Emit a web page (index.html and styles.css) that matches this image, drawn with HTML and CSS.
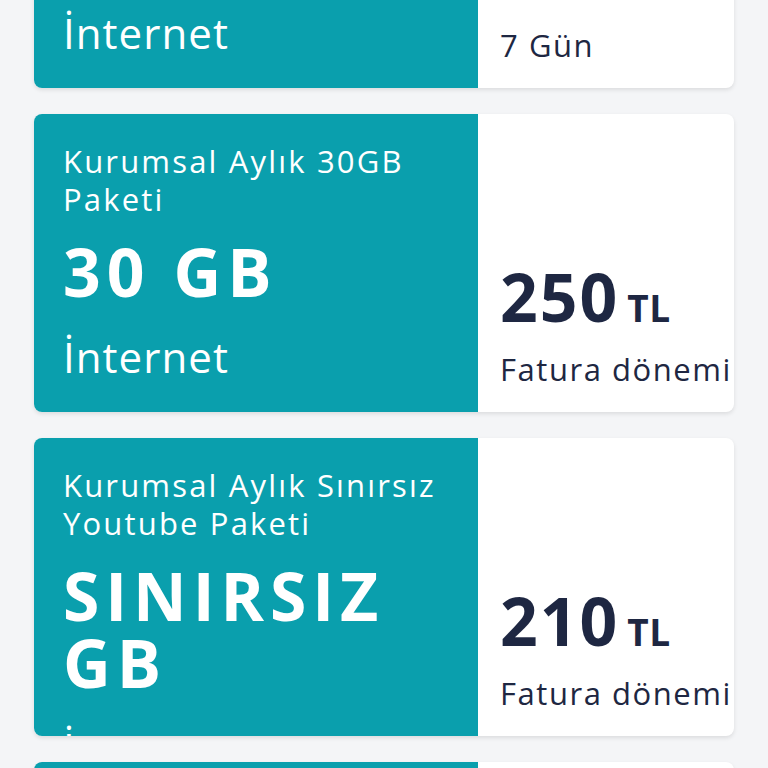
FILE: index.html
```html
<!DOCTYPE html>
<html lang="tr">
<head>
    <meta charset="UTF-8">
    <meta name="viewport" content="width=device-width, initial-scale=1.0">
    <title>Kurumsal Paketler</title>
    <link rel="stylesheet" href="styles.css">
</head>
<body>
    <!-- Package list (scrolled) -->
    <div class="packages">
        <div class="card">
            <div class="card-main">
                <p class="name">Kurumsal Haftalık 5GB Paketi</p>
                <p class="amount">5 GB</p>
                <p class="kind">İnternet</p>
            </div>
            <div class="card-price">
                <p class="price">45<span class="currency">TL</span></p>
                <p class="period">7 Gün</p>
            </div>
        </div>

        <div class="card">
            <div class="card-main">
                <p class="name">Kurumsal Aylık 30GB Paketi</p>
                <p class="amount">30 GB</p>
                <p class="kind">İnternet</p>
            </div>
            <div class="card-price">
                <p class="price">250<span class="currency">TL</span></p>
                <p class="period">Fatura dönemi</p>
            </div>
        </div>

        <div class="card">
            <div class="card-main">
                <p class="name">Kurumsal Aylık Sınırsız Youtube Paketi</p>
                <p class="amount">SINIRSIZ GB</p>
                <p class="kind">İnternet</p>
            </div>
            <div class="card-price">
                <p class="price">210<span class="currency">TL</span></p>
                <p class="period">Fatura dönemi</p>
            </div>
        </div>

        <div class="card">
            <div class="card-main">
                <p class="name">Kurumsal Aylık 50GB Paketi</p>
                <p class="amount">50 GB</p>
                <p class="kind">İnternet</p>
            </div>
            <div class="card-price">
                <p class="price">350<span class="currency">TL</span></p>
                <p class="period">Fatura dönemi</p>
            </div>
        </div>
    </div>
</body>
</html>
```

FILE: styles.css
```css
body {
    font-family: "Open Sans", Arial, sans-serif;
    margin: 0;
    padding: 0;
    background-color: #f4f5f7;
    overflow: hidden;
}

p {
    margin: 0;
}

/* List, scrolled so the first card is cut off */
.packages {
    display: flex;
    flex-direction: column;
    gap: 26px;
    padding: 0 34px;
    margin-top: -210px;
}

.card {
    display: flex;
    height: 298px;
    background-color: #ffffff;
    border-radius: 8px;
    overflow: hidden;
    box-shadow: 0px 2px 4px rgba(0, 0, 0, 0.1);
}

/* Left teal part */
.card-main {
    width: 444px;
    flex-shrink: 0;
    box-sizing: border-box;
    padding: 28px 20px 0 29px;
    background-color: #0a9fad;
    color: #ffffff;
}

.name {
    font-size: 31px;
    line-height: 38px;
    letter-spacing: 0.07em;
}

.amount {
    margin-top: 20px;
    font-size: 66px;
    line-height: 67px;
    font-weight: bold;
    letter-spacing: 0.09em;
}

.kind {
    margin-top: 24px;
    font-size: 42px;
    line-height: 56px;
    letter-spacing: 0.025em;
}

/* Right white part */
.card-price {
    flex: 1;
    display: flex;
    flex-direction: column;
    justify-content: flex-end;
    padding: 0 0 24px 22px;
    color: #1e2742;
    white-space: nowrap;
}

.price {
    margin-bottom: 9px;
    font-size: 66px;
    line-height: 66px;
    font-weight: bold;
    letter-spacing: 0.03em;
}

.currency {
    margin-left: 8px;
    font-size: 37px;
    letter-spacing: 0.02em;
}

.period {
    font-size: 31px;
    line-height: 38px;
    letter-spacing: 0.05em;
}
```
